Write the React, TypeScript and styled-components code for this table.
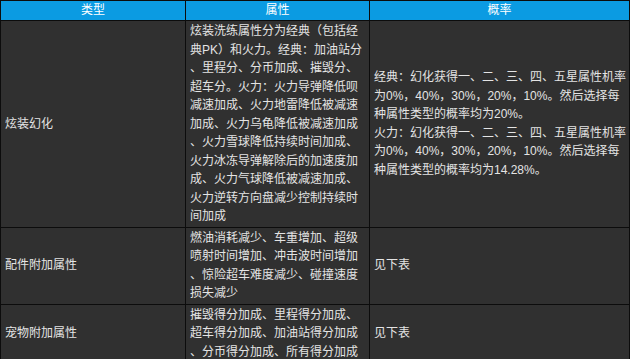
import React from "react";
import styled, { createGlobalStyle } from "styled-components";

type Row = {
  type: string;
  attr: string;
  rate: string[];
};

const rows: Row[] = [
  {
    type: "炫装幻化",
    attr:
      "炫装洗练属性分为经典（包括经典PK）和火力。经典：加油站分、里程分、分币加成、摧毁分、超车分。火力：火力导弹降低呗减速加成、火力地雷降低被减速加成、火力乌龟降低被减速加成、火力雪球降低持续时间加成、火力冰冻导弹解除后的加速度加成、火力气球降低被减速加成、火力逆转方向盘减少控制持续时间加成",
    rate: [
      "经典：幻化获得一、二、三、四、五星属性机率为0%，40%，30%，20%，10%。然后选择每种属性类型的概率均为20%。",
      "火力：幻化获得一、二、三、四、五星属性机率为0%，40%，30%，20%，10%。然后选择每种属性类型的概率均为14.28%。",
    ],
  },
  {
    type: "配件附加属性",
    attr: "燃油消耗减少、车重增加、超级喷射时间增加、冲击波时间增加、惊险超车难度减少、碰撞速度损失减少",
    rate: ["见下表"],
  },
  {
    type: "宠物附加属性",
    attr: "摧毁得分加成、里程得分加成、超车得分加成、加油站得分加成、分币得分加成、所有得分加成",
    rate: ["见下表"],
  },
];

const GlobalStyle = createGlobalStyle`
  html, body {
    margin: 0;
    padding: 0;
    background: #fff;
    overflow: hidden;
  }
  body {
    font-family: "Liberation Sans", "Noto Sans CJK SC", sans-serif;
  }
`;

const Page = styled.div`
  width: 631px;
  height: 359px;
  overflow: hidden;
`;

const Table = styled.table`
  width: 629px;
  table-layout: fixed;
  border-collapse: collapse;
  font-size: 12px;
  line-height: 18.5px;
  color: #e4e4e4;
  background: #303030;
`;

const Head = styled.th`
  height: 19px;
  padding: 0;
  background: #0b9be2;
  color: #fff;
  font-weight: normal;
  text-align: center;
  border: 1px solid #0c0c0c;
`;

const Cell = styled.td<{ $top?: boolean }>`
  padding: 1px 3px 1px 4px;
  vertical-align: ${(p) => (p.$top ? "top" : "middle")};
  border: 1px solid #0c0c0c;
  line-break: anywhere;
  word-break: break-all;
`;

const Para = styled.div``;

export default function App() {
  return (
    <Page>
      <GlobalStyle />
      <Table>
        <colgroup>
          <col style={{ width: 185 }} />
          <col style={{ width: 184 }} />
          <col style={{ width: 260 }} />
        </colgroup>
        <thead>
          <tr>
            <Head>类型</Head>
            <Head>属性</Head>
            <Head>概率</Head>
          </tr>
        </thead>
        <tbody>
          {rows.map((r) => (
            <tr key={r.type}>
              <Cell>{r.type}</Cell>
              <Cell $top>{r.attr}</Cell>
              <Cell>
                {r.rate.map((t) => (
                  <Para key={t}>{t}</Para>
                ))}
              </Cell>
            </tr>
          ))}
        </tbody>
      </Table>
    </Page>
  );
}
